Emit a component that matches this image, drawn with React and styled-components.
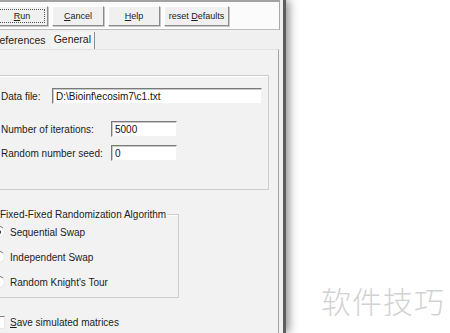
import React from "react";
import styled, { createGlobalStyle } from "styled-components";

const GlobalStyle = createGlobalStyle`
	html, body {
		margin: 0;
		padding: 0;
		background: #fff;
	}
	body {
		font-family: "Liberation Sans", Arial, sans-serif;
		font-size: 10px;
		color: #1c1c1c;
	}
`;

const Page = styled.div`
	display: flex;
	width: 450px;
	height: 333px;
	overflow: hidden;
`;

const Window = styled.div`
	flex-shrink: 0;
	width: 283px;
	height: 333px;
	overflow: hidden;
	background: #f0f0f0;
	border-right: 3px solid #5e5e5e;
	box-shadow: 3px 0 9px rgba(0, 0, 0, 0.45);
`;

const Inner = styled.div`
	margin-left: -14px;
	width: 297px;
`;

const Toolbar = styled.div`
	display: flex;
	align-items: center;
	gap: 4px;
	width: 294px;
	box-sizing: border-box;
	height: 30px;
	padding-left: 10px;
	background: #fbfbfb;
	border-top: 2px solid #a2a2a2;
	border-bottom: 1px solid #bdbdbd;
	border-right: 1px solid #a8a8a8;
`;

const Button = styled.div`
	display: flex;
	align-items: center;
	justify-content: center;
	box-sizing: border-box;
	width: ${(p) => p.$w || 52}px;
	height: 20px;
	font-size: 9px;
	color: #222;
	background: #f0f0f0;
	border: 1px solid;
	border-color: #fff #8c8c8c #8c8c8c #fff;
	box-shadow: 1px 1px 0 #c8c8c8;
	outline: ${(p) => (p.$focus ? "1px dotted #555" : "none")};
	outline-offset: -4px;
`;

const Tabs = styled.div`
	display: flex;
	align-items: flex-end;
	gap: 2px;
	height: 19px;
`;

const Tab = styled.div`
	box-sizing: border-box;
	padding: 0 3px;
	height: ${(p) => (p.$active ? "17px" : "15px")};
	line-height: ${(p) => (p.$active ? "15px" : "13px")};
	font-size: 10.5px;
	color: #1e1e1e;
	border-right: ${(p) => (p.$active ? "1px solid #8e8e8e" : "none")};
	background: ${(p) => (p.$active ? "#f4f4f4" : "transparent")};
`;

const Panel = styled.div`
	box-sizing: border-box;
	width: 293px;
	height: 300px;
	padding: 25px 0 0 8px;
	background: #f2f2f2;
	border-top: 1px solid #e2e2e2;
	border-right: 1px solid #a3a3a3;
`;

const Group = styled.div`
	box-sizing: border-box;
	width: 275px;
	height: 115px;
	padding: 12px 0 0 6px;
	border: 1px solid #cdcdcd;
	box-shadow: inset 1px 1px 0 #fff;
`;

const Row = styled.div`
	display: flex;
	align-items: center;
	height: 16px;
	margin-top: ${(p) => p.$mt || 0}px;
`;

const Label = styled.div`
	width: ${(p) => p.$w}px;
	flex-shrink: 0;
	font-size: 10px;
	color: #1c1c1c;
`;

const Field = styled.div`
	box-sizing: border-box;
	width: ${(p) => p.$w}px;
	height: 16px;
	padding: 1px 0 0 3px;
	font-size: 10px;
	line-height: 13px;
	color: #111;
	background: #fff;
	border: 1px solid;
	border-color: #7a7a7a #f3f3f3 #f3f3f3 #7a7a7a;
	box-shadow: inset 1px 1px 0 #c9c9c9;
`;

const AlgoSet = styled.fieldset`
	box-sizing: border-box;
	width: 185px;
	margin: 18px 0 0 0;
	padding: 4px 0 8px 0;
	border: 1px solid #cdcdcd;
	box-shadow: inset 1px 1px 0 #fff;
	display: flex;
	flex-direction: column;
	gap: 11px;
`;

const Legend = styled.legend`
	margin-left: 4px;
	padding: 0 1px;
	font-size: 10px;
	line-height: 13px;
	color: #1c1c1c;
`;

const Option = styled.div`
	display: flex;
	align-items: center;
	gap: 5px;
	height: 14px;
	font-size: 10px;
	color: #1c1c1c;
`;

const Radio = styled.span`
	position: relative;
	flex-shrink: 0;
	box-sizing: border-box;
	width: 12px;
	height: 12px;
	margin-left: -2px;
	border-radius: 50%;
	background: #fff;
	border: 1px solid;
	border-color: #808080 #e8e8e8 #e8e8e8 #808080;

	&::after {
		content: "";
		display: ${(p) => (p.$checked ? "block" : "none")};
		position: absolute;
		left: 3px;
		top: 3px;
		width: 4px;
		height: 4px;
		border-radius: 50%;
		background: #222;
	}
`;

const CheckRow = styled(Option)`
	margin-top: 17px;
	margin-left: -2px;
`;

const Box = styled.span`
	flex-shrink: 0;
	box-sizing: border-box;
	width: 13px;
	height: 13px;
	background: #fff;
	border: 1px solid;
	border-color: #808080 #e8e8e8 #e8e8e8 #808080;
`;

const Side = styled.div`
	flex: 1;
	display: flex;
	align-items: flex-end;
	padding: 0 0 16px 35px;
`;

const Watermark = styled.div`
	font-family: "Noto Sans CJK SC", "Noto Sans", sans-serif;
	font-size: 30px;
	font-weight: 300;
	line-height: 34px;
	letter-spacing: 1px;
	color: #d2d2d2;
`;

const App = () => {
	return (
		<Page>
			<GlobalStyle />
			<Window>
				<Inner>
					<Toolbar>
						<Button $focus>
							<u>R</u>un
						</Button>
						<Button>
							<u>C</u>ancel
						</Button>
						<Button>
							<u>H</u>elp
						</Button>
						<Button $w={65}>
							reset&nbsp;<u>D</u>efaults
						</Button>
					</Toolbar>
					<Tabs>
						<Tab>Preferences</Tab>
						<Tab $active>General</Tab>
					</Tabs>
					<Panel>
						<Group>
							<Row>
								<Label $w={51}>Data file:</Label>
								<Field $w={210}>D:\Bioinf\ecosim7\c1.txt</Field>
							</Row>
							<Row $mt={17}>
								<Label $w={110}>Number of iterations:</Label>
								<Field $w={66}>5000</Field>
							</Row>
							<Row $mt={8}>
								<Label $w={110}>Random number seed:</Label>
								<Field $w={66}>0</Field>
							</Row>
						</Group>
						<AlgoSet>
							<Legend>Fixed-Fixed Randomization Algorithm</Legend>
							<Option>
								<Radio $checked />
								Sequential Swap
							</Option>
							<Option>
								<Radio />
								Independent Swap
							</Option>
							<Option>
								<Radio />
								Random Knight's Tour
							</Option>
						</AlgoSet>
						<CheckRow>
							<Box />
							<span>
								<u>S</u>ave simulated matrices
							</span>
						</CheckRow>
					</Panel>
				</Inner>
			</Window>
			<Side>
				<Watermark>软件技巧</Watermark>
			</Side>
		</Page>
	);
};

export default App;
